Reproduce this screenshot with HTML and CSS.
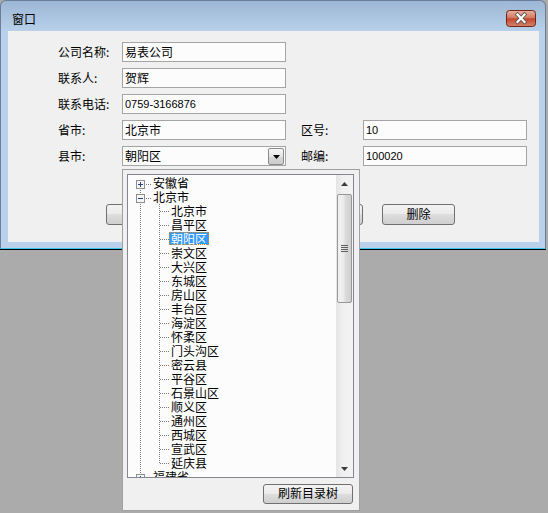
FILE: index.html
```html
<!DOCTYPE html>
<html lang="zh-CN">
<head>
<meta charset="utf-8">
<title>窗口</title>
<link rel="stylesheet" href="styles.css">
</head>
<body>
<div class="window">
  <div class="titlebar">
    <span class="title">窗口</span>
    <span class="close">
      <svg width="30" height="17" viewBox="0 0 30 17">
        <defs>
          <linearGradient id="cg" x1="0" y1="0" x2="0" y2="1">
            <stop offset="0" stop-color="#eab1a2"/>
            <stop offset="0.45" stop-color="#d27a63"/>
            <stop offset="0.52" stop-color="#c2472e"/>
            <stop offset="1" stop-color="#d9846d"/>
          </linearGradient>
        </defs>
        <rect x="0.5" y="0.5" width="29" height="16" rx="3" fill="url(#cg)" stroke="#6e2619"/>
        <path d="M11.5 4.5l7 7.5M18.5 4.5l-7 7.5" stroke="#555" stroke-width="3.8" stroke-linecap="square"/>
        <path d="M11.5 4.5l7 7.5M18.5 4.5l-7 7.5" stroke="#fff" stroke-width="2.2" stroke-linecap="square"/>
      </svg>
    </span>
  </div>
  <div class="client">
    <div class="form">
      <span class="lbl-l">公司名称:</span><div class="field f-l">易表公司</div>
      <span class="lbl-l">联系人:</span><div class="field f-l">贺辉</div>
      <span class="lbl-l">联系电话:</span><div class="field f-l num">0759-3166876</div>
      <span class="lbl-l">省市:</span><div class="field f-l">北京市</div>
      <span class="lbl-r">区号:</span><div class="field f-r num">10</div>
      <span class="lbl-l">县市:</span>
      <div class="field f-l combo">
        <span class="combo-text">朝阳区</span>
        <span class="combo-btn"><svg width="7" height="4" viewBox="0 0 7 4"><path d="M0 0H7L3.5 4z" fill="#000"/></svg></span>
      </div>
      <span class="lbl-r">邮编:</span><div class="field f-r num">100020</div>
    </div>
    <div class="buttons">
      <div class="btn">新增</div>
      <div class="btn">保存</div>
      <div class="btn">修改</div>
      <div class="btn">删除</div>
    </div>
  </div>
</div>

<div class="popup">
  <div class="treebox">
    <div class="tree-list">
      <div class="node root first"><span class="exp"><svg width="9" height="9" viewBox="0 0 9 9" shape-rendering="crispEdges"><rect x="0.5" y="0.5" width="8" height="8" fill="#f6f6f6" stroke="#8e8f8f"/><path d="M2 4.5h5M4.5 2v5" stroke="#23408a"/></svg></span><span class="hl"></span><span class="lbl">安徽省</span></div>
      <div class="node root"><span class="exp"><svg width="9" height="9" viewBox="0 0 9 9" shape-rendering="crispEdges"><rect x="0.5" y="0.5" width="8" height="8" fill="#f6f6f6" stroke="#8e8f8f"/><path d="M2 4.5h5" stroke="#23408a"/></svg></span><span class="hl"></span><span class="lbl">北京市</span></div>
      <div class="node child"><span class="pipe"></span><span class="conn"></span><span class="lbl">北京市</span></div>
      <div class="node child"><span class="pipe"></span><span class="conn"></span><span class="lbl">昌平区</span></div>
      <div class="node child"><span class="pipe"></span><span class="conn"></span><span class="lbl sel">朝阳区</span></div>
      <div class="node child"><span class="pipe"></span><span class="conn"></span><span class="lbl">崇文区</span></div>
      <div class="node child"><span class="pipe"></span><span class="conn"></span><span class="lbl">大兴区</span></div>
      <div class="node child"><span class="pipe"></span><span class="conn"></span><span class="lbl">东城区</span></div>
      <div class="node child"><span class="pipe"></span><span class="conn"></span><span class="lbl">房山区</span></div>
      <div class="node child"><span class="pipe"></span><span class="conn"></span><span class="lbl">丰台区</span></div>
      <div class="node child"><span class="pipe"></span><span class="conn"></span><span class="lbl">海淀区</span></div>
      <div class="node child"><span class="pipe"></span><span class="conn"></span><span class="lbl">怀柔区</span></div>
      <div class="node child"><span class="pipe"></span><span class="conn"></span><span class="lbl">门头沟区</span></div>
      <div class="node child"><span class="pipe"></span><span class="conn"></span><span class="lbl">密云县</span></div>
      <div class="node child"><span class="pipe"></span><span class="conn"></span><span class="lbl">平谷区</span></div>
      <div class="node child"><span class="pipe"></span><span class="conn"></span><span class="lbl">石景山区</span></div>
      <div class="node child"><span class="pipe"></span><span class="conn"></span><span class="lbl">顺义区</span></div>
      <div class="node child"><span class="pipe"></span><span class="conn"></span><span class="lbl">通州区</span></div>
      <div class="node child"><span class="pipe"></span><span class="conn"></span><span class="lbl">西城区</span></div>
      <div class="node child"><span class="pipe"></span><span class="conn"></span><span class="lbl">宣武区</span></div>
      <div class="node child last"><span class="pipe"></span><span class="conn"></span><span class="lbl">延庆县</span></div>
      <div class="node root lastroot"><span class="exp"><svg width="9" height="9" viewBox="0 0 9 9" shape-rendering="crispEdges"><rect x="0.5" y="0.5" width="8" height="8" fill="#f6f6f6" stroke="#8e8f8f"/><path d="M2 4.5h5M4.5 2v5" stroke="#23408a"/></svg></span><span class="hl"></span><span class="lbl">福建省</span></div>
    </div>
    <div class="vscroll">
      <div class="sb-arrow"><svg width="7" height="4" viewBox="0 0 7 4"><path d="M3.5 0L7 4H0z" fill="#3c3c3c"/></svg></div>
      <div class="sb-thumb"><svg width="7" height="7" viewBox="0 0 7 7" shape-rendering="crispEdges"><path d="M0 0.5h7M0 2.5h7M0 4.5h7M0 6.5h7" stroke="#5e5e5e"/></svg></div>
      <div class="sb-track"></div>
      <div class="sb-arrow"><svg width="7" height="4" viewBox="0 0 7 4"><path d="M0 0H7L3.5 4z" fill="#3c3c3c"/></svg></div>
    </div>
  </div>
  <div class="popup-foot">
    <div class="btn btn-wide">刷新目录树</div>
  </div>
</div>
</body>
</html>
```

FILE: styles.css
```css
html, body {
  margin: 0;
  padding: 0;
}

body {
  width: 548px;
  height: 513px;
  overflow: hidden;
  position: relative;
  background: #ababab;
  font-family: "Noto Sans CJK SC", "Noto Sans", sans-serif;
  font-size: 12px;
  line-height: 16px;
  color: #000;
}

.window {
  width: 546px;
  box-sizing: border-box;
  border: 1px solid #6c7f96;
  border-bottom: 1px solid #3ac6ea;
  border-radius: 6px 6px 0 0;
  background: linear-gradient(#9cb6d5 0, #b9d1ea 31px, #b9d1ea 100%);
  box-shadow: 0 1px 0 #000;
  padding-bottom: 6px;
}

.titlebar {
  height: 30px;
  display: flex;
  justify-content: space-between;
  align-items: flex-start;
  padding: 0 9px 0 11px;
}

.title {
  margin-top: 10px;
  line-height: 16px;
}

.close {
  margin-top: 9px;
  display: block;
  height: 17px;
}

.close svg {
  display: block;
}

.client {
  margin: 0 6px 0 7px;
  height: 211px;
  background: #f0f0f0;
}

.form {
  display: grid;
  grid-template-columns: 64px 164px 15px 62px 164px;
  grid-auto-rows: 20px;
  row-gap: 6px;
  padding: 11px 0 0 50px;
}

.lbl-l {
  grid-column: 1;
  align-self: center;
}

.f-l {
  grid-column: 2;
}

.lbl-r {
  grid-column: 4;
  align-self: center;
}

.f-r {
  grid-column: 5;
}

.field {
  box-sizing: border-box;
  border: 1px solid #a4a4a4;
  background: #fcfcfc;
  padding-left: 2px;
  display: flex;
  align-items: center;
  line-height: 18px;
}

.num {
  font-family: "Liberation Sans", Arial, sans-serif;
  font-size: 11px;
}

.combo {
  justify-content: space-between;
  padding-right: 1px;
}

.combo-btn {
  width: 16px;
  height: 17px;
  box-sizing: border-box;
  border: 1px solid #8a8a8a;
  border-radius: 2px;
  background: linear-gradient(#f6f6f6, #e6e6e6 50%, #d6d6d6 51%, #cdcdcd);
  display: flex;
  align-items: center;
  justify-content: center;
}

.combo-btn svg {
  display: block;
  margin-top: 1px;
}

.buttons {
  display: flex;
  gap: 19px;
  padding-left: 98px;
  margin-top: 38px;
}

.btn {
  width: 73px;
  height: 21px;
  box-sizing: border-box;
  border: 1px solid #707070;
  border-radius: 3px;
  background: linear-gradient(#f3f3f3 0, #ebebeb 48%, #dddddd 50%, #cfcfcf 100%);
  display: flex;
  align-items: center;
  justify-content: center;
  padding-bottom: 2px;
  line-height: 14px;
}

.popup {
  position: absolute;
  left: 122px;
  top: 169px;
  width: 238px;
  height: 342px;
  box-sizing: border-box;
  border: 1px solid #a0a0a0;
  background: #f0f0f0;
  padding: 4px 5px 0 4px;
  display: flex;
  flex-direction: column;
}

.treebox {
  height: 304px;
  box-sizing: border-box;
  border: 1px solid #828790;
  background: #fcfcfc;
  display: flex;
}

.tree-list {
  flex: 1;
  overflow: hidden;
  padding-top: 1px;
}

.node {
  height: 14px;
  display: flex;
  align-items: flex-start;
  white-space: nowrap;
}

.exp {
  width: 9px;
  height: 14px;
  margin-left: 8px;
  box-sizing: border-box;
  padding-top: 4px;
  background-image: repeating-linear-gradient(to bottom, #7c7c7c 0 1px, transparent 1px 2px);
  background-size: 1px 14px;
  background-position: 4px 0;
  background-repeat: no-repeat;
}

.exp svg {
  display: block;
}

.first .exp {
  background-size: 1px 6px;
  background-position: 4px 8px;
}

.lastroot .exp {
  background-size: 1px 4px;
  background-position: 4px 0;
}

.hl {
  width: 5px;
  height: 14px;
  margin-left: 1px;
  background-image: repeating-linear-gradient(to right, #7c7c7c 0 1px, transparent 1px 2px);
  background-size: 5px 1px;
  background-position: 0 8px;
  background-repeat: no-repeat;
}

.pipe {
  width: 19px;
  height: 14px;
  margin-left: 12px;
  background-image: repeating-linear-gradient(to bottom, #7c7c7c 0 1px, transparent 1px 2px);
  background-size: 1px 14px;
  background-repeat: no-repeat;
}

.conn {
  width: 10px;
  height: 14px;
  background-image:
    repeating-linear-gradient(to bottom, #7c7c7c 0 1px, transparent 1px 2px),
    repeating-linear-gradient(to right, #7c7c7c 0 1px, transparent 1px 2px);
  background-size: 1px 14px, 9px 1px;
  background-position: 0 0, 1px 7px;
  background-repeat: no-repeat;
}

.last .conn {
  background-size: 1px 8px, 9px 1px;
}

.lbl {
  padding: 0 2px;
  height: 13px;
  line-height: 13px;
  box-sizing: border-box;
}

.lbl.sel {
  background: #3399ff;
  color: #fff;
  outline: 1px dotted #d98a1a;
  outline-offset: -1px;
}

.vscroll {
  width: 17px;
  display: flex;
  flex-direction: column;
  align-items: stretch;
  background: linear-gradient(to right, #e4e4e4, #f0f0f0 40%, #f3f3f3);
}

.sb-arrow {
  height: 17px;
  display: flex;
  align-items: center;
  justify-content: center;
}

.sb-arrow svg {
  display: block;
}

.sb-thumb {
  height: 109px;
  margin: 2px 1px 0 1px;
  box-sizing: border-box;
  border: 1px solid #979797;
  border-radius: 2px;
  background: linear-gradient(to right, #f1f1f1 0, #ececec 40%, #dadada 60%, #cfcfcf 100%);
  display: flex;
  align-items: center;
  justify-content: center;
}

.sb-thumb svg {
  display: block;
}

.sb-track {
  flex: 1;
}

.popup-foot {
  display: flex;
  justify-content: flex-end;
  margin-top: 6px;
  padding-right: 1px;
}

.btn-wide {
  width: 90px;
  height: 20px;
}
```
